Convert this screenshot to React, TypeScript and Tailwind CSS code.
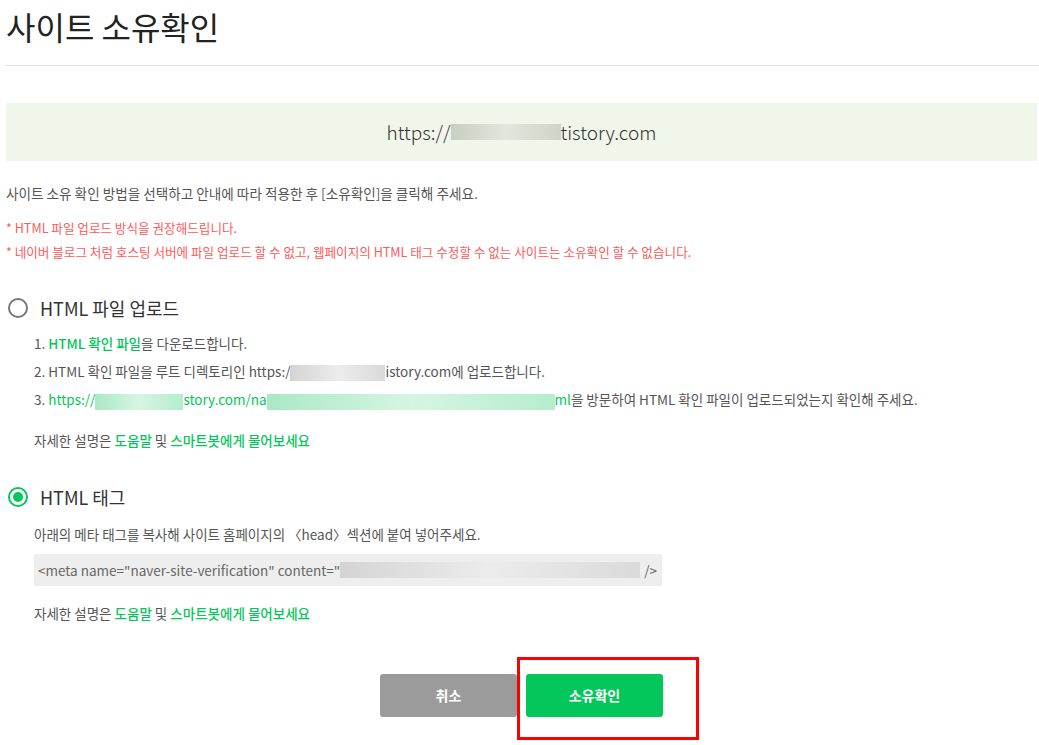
const font = {
  fontFamily: '"Noto Sans CJK KR", "Noto Sans", sans-serif',
};

const Blur = ({ w, tone }: { w: number; tone: "gray" | "green" | "light" }) => {
  const cls =
    tone === "green"
      ? "bg-gradient-to-r from-[#a9e9c4] via-[#d6f5e3] to-[#b4edcc]"
      : tone === "light"
        ? "bg-gradient-to-r from-[#c9cec2] via-[#e2e6dc] to-[#cfd4c8]"
        : "bg-gradient-to-r from-[#d4d4d4] via-[#ececec] to-[#dadada]";
  return (
    <span
      className={`inline-block h-[16px] align-middle ${cls}`}
      style={{ width: w }}
    />
  );
};

const Radio = ({ checked }: { checked?: boolean }) =>
  checked ? (
    <span className="flex h-[20px] w-[20px] items-center justify-center rounded-full border-[2px] border-[#03c75a]">
      <span className="h-[10px] w-[10px] rounded-full bg-[#03c75a]" />
    </span>
  ) : (
    <span className="h-[20px] w-[20px] rounded-full border-[2px] border-[#777]" />
  );

const Help = () => (
  <p className="text-[13.5px] text-[#555]">
    자세한 설명은 <span className="font-medium text-[#03c75a]">도움말</span> 및{" "}
    <span className="font-medium text-[#03c75a]">스마트봇에게 물어보세요</span>
  </p>
);

export default function App() {
  return (
    <div className="relative min-h-[745px] bg-white pl-[6px] text-[#333]" style={font}>
      <h1 className="pt-[4px] text-[32px] leading-[44px] text-[#222]">사이트 소유확인</h1>
      <div className="mt-[17px] h-px bg-[#e0e0e0]" />

      <div className="mr-[2px] mt-[37px] flex h-[58px] items-center justify-center bg-[#f0f6e9] text-[19px] font-light text-[#333]">
        <span>https://</span>
        <Blur w={110} tone="light" />
        <span>tistory.com</span>
      </div>

      <p className="mt-[22px] text-[13.6px] leading-[20px] text-[#555]">
        사이트 소유 확인 방법을 선택하고 안내에 따라 적용한 후 [소유확인]을 클릭해 주세요.
      </p>
      <p className="mt-[15px] text-[12.6px] leading-[20px] text-[#ff5a5a]">
        * HTML 파일 업로드 방식을 권장해드립니다.
      </p>
      <p className="mt-[4px] text-[12.6px] leading-[20px] text-[#ff5a5a]">
        * 네이버 블로그 처럼 호스팅 서버에 파일 업로드 할 수 없고, 웹페이지의 HTML 태그 수정할 수 없는 사이트는 소유확인 할 수 없습니다.
      </p>

      <div className="mt-[34px] flex items-center gap-[12px] pl-[2px]">
        <Radio />
        <span className="text-[18px] leading-[24px] text-[#333]">HTML 파일 업로드</span>
      </div>
      <div className="mt-[13px] flex flex-col gap-[8px] pl-[28px] text-[13.5px] leading-[20px] text-[#555]">
        <p>
          1. <span className="font-medium text-[#03c75a]">HTML 확인 파일</span>을 다운로드합니다.
        </p>
        <p>
          2. HTML 확인 파일을 루트 디렉토리인 https:/
          <Blur w={95} tone="gray" />
          istory.com에 업로드합니다.
        </p>
        <p>
          3. <span className="text-[#03c75a]">https://</span>
          <Blur w={88} tone="green" />
          <span className="text-[#03c75a]">story.com/na</span>
          <Blur w={288} tone="green" />
          <span className="text-[#03c75a]">ml</span>을 방문하여 HTML 확인 파일이 업로드되었는지 확인해 주세요.
        </p>
        <div className="mt-[12px]">
          <Help />
        </div>
      </div>

      <div className="mt-[35px] flex items-center gap-[12px] pl-[2px]">
        <Radio checked />
        <span className="text-[18px] leading-[24px] text-[#333]">HTML 태그</span>
      </div>
      <div className="mt-[15px] pl-[28px]">
        <p className="text-[13.5px] leading-[20px] text-[#555]">
          아래의 메타 태그를 복사해 사이트 홈페이지의 〈head〉섹션에 붙여 넣어주세요.
        </p>
        <div className="mt-[10px] flex h-[32px] w-[628px] items-center whitespace-nowrap bg-[#eeeeee] px-[4px] text-[13.5px] text-[#666]">
          <span>&lt;meta name="naver-site-verification" content="</span>
          <Blur w={300} tone="gray" />
          <span className="ml-[4px]">/&gt;</span>
        </div>
        <div className="mt-[17px]">
          <Help />
        </div>
      </div>

      <div className="mt-[51px] flex justify-center gap-[9px] pr-[2px]">
        <button className="h-[43px] w-[137px] rounded-[3px] bg-[#9b9b9b] text-[14px] font-bold text-white">
          취소
        </button>
        <button className="h-[43px] w-[137px] rounded-[3px] bg-[#03c75a] text-[14px] font-bold text-white">
          소유확인
        </button>
      </div>

      <div className="absolute left-[517px] top-[657px] h-[83px] w-[182px] border-[3px] border-[#ff0000]" />
    </div>
  );
}
